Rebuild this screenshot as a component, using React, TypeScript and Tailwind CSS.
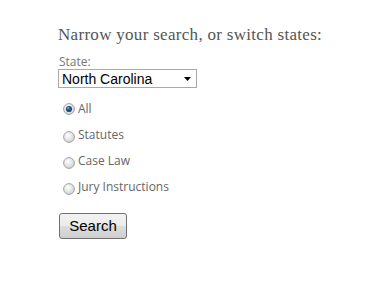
import React from "react";

const options = ["All", "Statutes", "Case Law", "Jury Instructions"];

function Radio({ checked }: { checked: boolean }) {
  return (
    <svg width="12" height="12" viewBox="0 0 12 12" className="shrink-0">
      <defs>
        <radialGradient id={checked ? "rg1" : "rg0"} cx="40%" cy="35%" r="70%">
          <stop offset="0%" stopColor="#ffffff" />
          <stop offset="100%" stopColor="#cfcfcf" />
        </radialGradient>
      </defs>
      <circle cx="6" cy="6" r="5.4" fill={`url(#${checked ? "rg1" : "rg0"})`} stroke="#9a9a9a" strokeWidth="0.9" />
      {checked && <circle cx="6" cy="6" r="3.1" fill="#2a4e82" />}
      {checked && <circle cx="5.3" cy="5.2" r="1.1" fill="#7fa6d8" />}
    </svg>
  );
}

export default function App() {
  return (
    <div className="w-[391px] h-[295px] bg-white relative">
      <div className="pt-[24px] pl-[58px]">
        <div
          className="text-[17px] leading-[22px] text-[#555] tracking-[0.3px]"
          style={{ fontFamily: '"Liberation Serif", serif' }}
        >
          Narrow your search, or switch states:
        </div>
        <div className="mt-[10px] flex flex-col" style={{ fontFamily: '"Open Sans", sans-serif' }}>
          <div className="text-[12px] leading-[12px] text-[#777] pl-[1px]">State:</div>
          <div
            className="mt-[1px] w-[139px] h-[19px] border border-[#a9a9a9] flex items-center justify-between pl-[3px] pr-[5px] bg-white"
            style={{ fontFamily: '"Liberation Sans", Arial, sans-serif' }}
          >
            <span className="text-[14px] leading-[16px] text-black">North Carolina</span>
            <svg width="7" height="4" viewBox="0 0 7 4">
              <path d="M0 0 L7 0 L3.5 4 Z" fill="#000" />
            </svg>
          </div>
          <div className="mt-[12px] pl-[5px] flex flex-col gap-[9px]">
            {options.map((o, i) => (
              <div key={o} className="flex items-center gap-[3px] h-[17px]">
                <div className={i === 0 ? "" : "mt-[4px]"}>
                  <Radio checked={i === 0} />
                </div>
                <span className="text-[12px] leading-[17px] text-[#666]">{o}</span>
              </div>
            ))}
          </div>
          <div className="mt-[18px] pl-[1px]">
            <button
              className="w-[68px] h-[26px] rounded-[3px] border border-[#707070] text-[15px] text-black"
              style={{
                fontFamily: '"Liberation Sans", Arial, sans-serif',
                background: "linear-gradient(#f2f2f2 0%, #ebebeb 50%, #dddddd 51%, #cfcfcf 100%)",
              }}
            >
              Search
            </button>
          </div>
        </div>
      </div>
    </div>
  );
}
